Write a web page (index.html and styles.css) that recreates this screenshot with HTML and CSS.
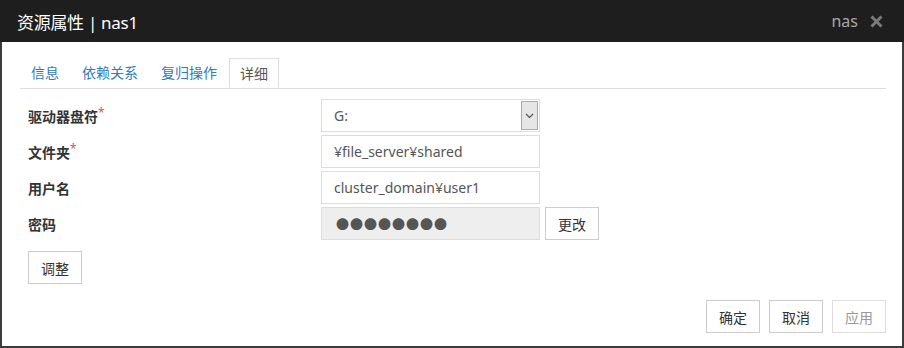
FILE: index.html
```html
<!DOCTYPE html>
<html lang="zh">
<head>
    <meta charset="UTF-8">
    <title>资源属性</title>
    <link rel="stylesheet" href="styles.css">
</head>
<body>
    <div class="dialog">
        <div class="dialog-header">
            <span class="dialog-title">资源属性 | nas1</span>
            <span class="dialog-type">nas</span>
            <svg class="close-btn" width="13" height="13" viewBox="0 0 13 13">
                <path d="M1.5 1.5 L11.5 11.5 M11.5 1.5 L1.5 11.5" stroke="#7a7a7a" stroke-width="3" stroke-linecap="butt"/>
            </svg>
        </div>
        <div class="dialog-body">
            <ul class="tabs">
                <li>信息</li>
                <li>依赖关系</li>
                <li>复归操作</li>
                <li class="active">详细</li>
            </ul>

            <div class="form-row">
                <label>驱动器盘符<span class="req">*</span></label>
                <div class="select">
                    <span>G:</span>
                    <span class="select-arrow">
                        <svg width="9" height="6" viewBox="0 0 9 6"><path d="M1 1 L4.5 4.5 L8 1" fill="none" stroke="#555" stroke-width="1.2"/></svg>
                    </span>
                </div>
            </div>
            <div class="form-row">
                <label>文件夹<span class="req">*</span></label>
                <input type="text" value="¥file_server¥shared">
            </div>
            <div class="form-row">
                <label>用户名</label>
                <input type="text" value="cluster_domain¥user1">
            </div>
            <div class="form-row">
                <label>密码</label>
                <div class="password">●●●●●●●●</div>
                <button class="btn change-btn">更改</button>
            </div>

            <button class="btn tune-btn">调整</button>

            <div class="footer">
                <button class="btn">确定</button>
                <button class="btn">取消</button>
                <button class="btn disabled">应用</button>
            </div>
        </div>
    </div>
</body>
</html>
```

FILE: styles.css
```css
body {
    margin: 0;
    padding: 0;
    background: #fff;
    font-family: "Noto Sans", "Noto Sans CJK SC", sans-serif;
}
.dialog {
    width: 904px;
    height: 348px;
    box-sizing: border-box;
    border: 2px solid #3c3c3c;
    border-top: none;
    background: #fff;
}
.dialog-header {
    height: 42px;
    background: #1e1e1e;
    display: flex;
    align-items: center;
    padding: 0 21px 0 17px;
    margin: 0 -2px;
}
.dialog-title {
    color: #fff;
    font-size: 17px;
    flex: 1;
    letter-spacing: -0.3px;
}
.dialog-type {
    color: #a8a8a8;
    font-size: 16px;
    margin-right: 12px;
}
.dialog-body {
    padding: 16px 16px 0 26px;
}
.tabs {
    list-style: none;
    margin: 0 0 10px -8px;
    padding: 0;
    display: flex;
    height: 30px;
    border-bottom: 1px solid #ddd;
}
.tabs li {
    font-size: 14px;
    color: #337ab7;
    padding: 0 11px;
    line-height: 29px;
    margin-right: 1px;
}
.tabs li.active {
    color: #555;
    border: 1px solid #ddd;
    border-bottom-color: #fff;
    background: #fff;
    height: 30px;
    box-sizing: border-box;
    padding: 0 10px;
}
.form-row {
    display: flex;
    align-items: center;
    margin-bottom: 3px;
}
.form-row label {
    width: 293px;
    font-size: 14px;
    font-weight: bold;
    color: #333;
}
.req {
    color: #d9534f;
    font-weight: normal;
    position: relative;
    top: -5px;
    font-size: 12px;
}
.select,
.form-row input,
.password {
    width: 219px;
    height: 33px;
    box-sizing: border-box;
    border: 1px solid #ddd;
    font-family: inherit;
    font-size: 14px;
    color: #555;
    padding: 0 12px;
    display: flex;
    align-items: center;
}
.select {
    justify-content: space-between;
    padding-right: 1px;
}
.select-arrow {
    width: 17px;
    height: 29px;
    box-sizing: border-box;
    background: #e6e6e6;
    border: 1px solid #aaa;
    display: flex;
    align-items: center;
    justify-content: center;
}
.password {
    background: #eee;
    color: #555;
    letter-spacing: 1px;
    font-size: 13px;
    padding-left: 14px;
}
.btn {
    height: 33px;
    width: 54px;
    border: 1px solid #ccc;
    background: #fff;
    font-family: inherit;
    font-size: 14px;
    color: #333;
    padding: 0;
}
.change-btn {
    margin-left: 5px;
}
.tune-btn {
    margin-top: 8px;
}
.footer {
    display: flex;
    justify-content: flex-end;
    gap: 9px;
    margin-top: 16px;
}
.btn.disabled {
    color: #999;
    border-color: #ddd;
}
```
